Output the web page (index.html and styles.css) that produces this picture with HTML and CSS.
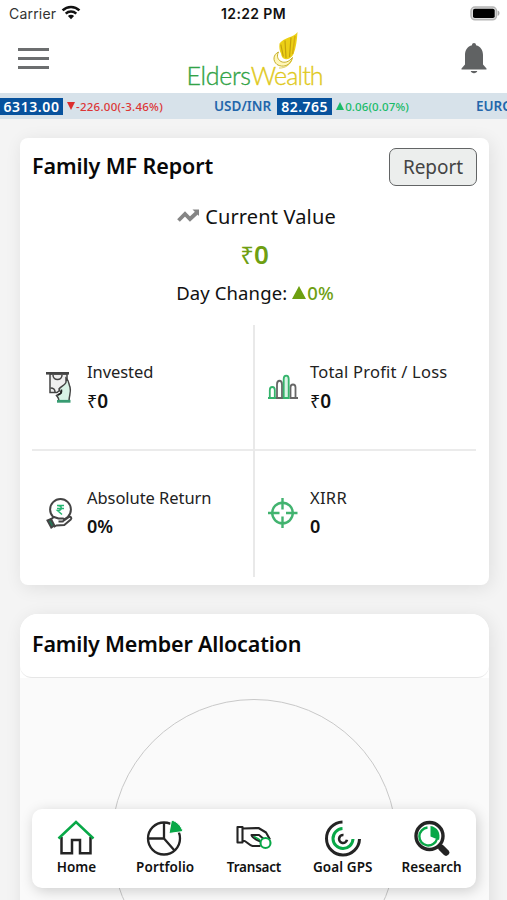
FILE: index.html
```html
<!DOCTYPE html>
<html lang="en">
<head>
<meta charset="utf-8">
<meta name="viewport" content="width=device-width, initial-scale=1">
<title>EldersWealth</title>
<link rel="stylesheet" href="styles.css">
</head>
<body>
<div class="screen">
  <div class="status">
    <div class="status-side"><span class="carrier">Carrier</span>
      <svg width="20" height="15" viewBox="0 0 20 15" fill="none" stroke="#111"><path d="M1.600 5.400a12 12 0 0 1 16.800 0" stroke-width="2.600"/><path d="M4.700 8.700a7.600 7.600 0 0 1 10.600 0" stroke-width="2.400"/><path d="M10 14.200 6.900 11a4.400 4.400 0 0 1 6.200 0z" fill="#111" stroke="none"/></svg>
    </div>
    <span class="clock">12:22 PM</span>
    <div class="status-side status-end">
      <svg width="30" height="15" viewBox="0 0 30 15"><rect x="1" y="1" width="25.500" height="12.800" rx="4" fill="#ddd" stroke="#b5b5b5" stroke-width="1.500"/><rect x="3" y="2.800" width="21.700" height="9.200" rx="1.800" fill="#000"/><path d="M27.700 4.600c2.400 1 2.400 4.200 0 5.200z" fill="#aaa"/></svg>
    </div>
  </div>

  <header class="topbar">
    <div class="menu"><i></i><i></i><i></i></div>
    <div class="logo">
      <svg class="wing" width="26" height="37" viewBox="0 0 26 37">
        <path d="M24.500 0C21.500 5 10 6 6.500 11.500c-.5 4 0 7.500 1.500 10 .5 3 2 5.500 4 5.500 4 1 7-2 8.500-5 2.500-6 3.500-14 4-22z" fill="#ecd015"/>
        <path d="M18 5.500 16.500 25M12 8.500 13 26M7.800 12.500l2.500 12" stroke="#c4a10c" stroke-width="1.200" fill="none"/>
        <path d="M22 4 19.500 22" stroke="#d8ae10" stroke-width="1.500"/>
        <path d="M5.500 20C0 22.500-.5 29 4 32.500c5.500 3.500 13.500 1.500 15.500-7-3.500 4.500-8 5.700-11.500 4C4.500 27.500 3.500 24 5.500 20z" fill="#fff6b8" stroke="#c0a718" stroke-width=".9"/>
        <path d="M6 36c6 .5 11.500-3.500 13-8.500" fill="none" stroke="#d9bd12" stroke-width=".7"/>
      </svg>
      <div class="wordmark"><span>Elders</span><b>Wealth</b></div>
    </div>
    <svg class="bell" width="26" height="31" viewBox="0 0 26 31" fill="#606263"><path d="M13 0c1.200 0 2 .9 2 2.200C19.500 3.300 22 7 22 12v9.500l3.500 4V26.500H.5V25.500l3.500-4V12c0-5 2.500-8.700 7-9.800C11 .9 11.800 0 13 0zM9.700 28h6.600c-.4 1.400-1.700 2.200-3.300 2.200s-2.900-.8-3.300-2.200z"/></svg>
  </header>

  <div class="ticker">
    <div class="quote"><span class="price p1">6313.00</span><span class="down"><i class="tri tri-down"></i>-226.00(-3.46%)</span></div>
    <div class="quote q2"><span class="pair">USD/INR</span><span class="price p2">82.765</span><span class="up"><i class="tri tri-up"></i>0.06(0.07%)</span></div>
    <div class="quote q3"><span class="pair">EURO/INR</span></div>
  </div>

  <main>
    <section class="card report">
      <div class="card-head"><h2>Family MF Report</h2><button class="btn">Report</button></div>
      <div class="summary">
        <div class="current"><svg width="23" height="14" viewBox="0 0 23 14" fill="none" stroke="#858585" stroke-width="3.800"><path d="M1.500 11.500 8 5l5 5 7-6.500"/><path d="M15.500.5H22v6.500z" fill="#858585" stroke="none"/></svg><span>Current Value</span></div>
        <div class="amount">₹<b>0</b></div>
        <div class="day"><span>Day Change:</span><i class="tri tri-day"></i><em>0%</em></div>
      </div>
      <div class="stats">
        <div class="stat">
          <svg width="30" height="34" viewBox="0 0 30 34" fill="none" stroke="#444" stroke-width="1.500"><path d="M5 4v18.500h7l6-5 4-5V4z" fill="#eee"/><path d="M1 3.300h23" stroke-width="2.600"/><path d="M5.500 18c3 0 4.500 2 4.500 4M8 5c0 6 9 6 9 0"/><path d="M21 12.500V8c3 2.500 2.500 5.500 4 9 1.500 5-1 8.500-1 14H14c0-3-1-3.500-2.500-5.500L16 23l-2-4c2-3 5-3 7-6.500" fill="#d8f2e5"/><path d="M13 25c3-1 4-2.500 3.500-5.500" stroke="#222"/><path d="M12 31.300h13.500" stroke="#389b72" stroke-width="2.800"/></svg>
          <div><div class="label l1">Invested</div><div class="value">₹<b>0</b></div></div>
        </div>
        <div class="stat right">
          <svg width="30" height="34" viewBox="0 0 30 34" fill="none" stroke-width="1.800"><g stroke="#666"><path d="M9 28V14.500c0-5 5-5 5 0V28M22.500 28V17.500c0-4 5-4 5 0V28M8 28h7M21.500 28H30"/></g><g stroke="#35b46c"><path d="M1.800 28v-8c0-4 5-4 5 0v8M0 28h8"/><path d="M15.700 28V9c0-4.600 5-4.600 5 0v19z" fill="#d8f3e4"/></g></svg>
          <div><div class="label l2">Total Profit / Loss</div><div class="value">₹<b>0</b></div></div>
        </div>
        <div class="stat lower">
          <svg width="30" height="34" viewBox="0 0 30 34" fill="none" stroke="#444" stroke-width="2"><circle cx="15.500" cy="13.500" r="10.400"/><path d="M5.500 23.500 9 21l4.500 1.500h4.500c1.800.5 1.500 3-.5 3h-4M17.500 25.500l6.500-4.500c2-.6 3 1 1.800 2.500l-6.500 5.500-8 .5-2.500 1.500" fill="#fff" stroke-linejoin="round"/><path d="m2.500 24.500 3.500-1.500 3.300 6.500-3 2z" fill="#237657"/><path d="M12 9.500h7M12 12.500h7M12.500 9.500c5 0 5 5 0 5l4.500 4" stroke="#25b572" stroke-width="1.500"/></svg>
          <div><div class="label l3">Absolute Return</div><div class="value"><b>0%</b></div></div>
        </div>
        <div class="stat right lower">
          <svg width="30" height="34" viewBox="0 0 30 34" fill="none" stroke="#42b36f" stroke-width="2.400"><circle cx="14.500" cy="17" r="10.300"/><path d="M14.500 2v11.500M14.500 20.500V32M0 17h11.500M18 17h11.500"/></svg>
          <div><div class="label l4">XIRR</div><div class="value"><b>0</b></div></div>
        </div>
      </div>
    </section>

    <section class="card alloc">
      <div class="alloc-head"><h2 class="wide">Family Member Allocation</h2></div>
      <div class="chart"><div class="ring"></div></div>
    </section>
  </main>

  <nav class="tabs">
    <div class="tab"><svg width="38" height="38" viewBox="0 0 38 38" fill="none" stroke="#242424" stroke-width="2.500"><path d="M4.500 18v16.200H15V21h8v13.200h10.500V18"/><path d="M1.500 19.500 19 3l17.500 16.500" stroke="#08a847"/></svg><span class="t1">Home</span></div>
    <div class="tab"><svg width="38" height="38" viewBox="0 0 38 38" fill="none" stroke="#242424" stroke-width="2.300"><circle cx="18" cy="19.500" r="16"/><path d="M18 3.500v16H2M18 19.500l10.500 12"/><path d="M23 14.500 25.500 1C31 2.500 35 6.500 37 12.500z" fill="#08a847" stroke="#fff" stroke-width="1"/></svg><span class="t2">Portfolio</span></div>
    <div class="tab"><svg width="38" height="38" viewBox="0 0 38 38" fill="none" stroke="#242424" stroke-width="2.100" stroke-linejoin="round"><path d="M2.500 8h5v15.500h-5zM7.500 9.500 23.500 9l7.500 4.500 4 7M7.500 21.500c4 0 6 4.500 10 5.500h8"/><path d="m30 21-6-5h-7.500c1 3 3.500 4.500 9 6.500"/><path d="m19 17.500 6 3.500" stroke="#08a847" stroke-width="1.500"/><circle cx="30.500" cy="24" r="5" fill="#fff" stroke="#08a847"/></svg><span class="t3">Transact</span></div>
    <div class="tab"><svg width="38" height="38" viewBox="0 0 38 38" fill="none" stroke-width="3"><path d="M18.500 3A16.500 16.500 0 1 0 35.500 20" stroke="#242424"/><path d="M18.500 9.500A10 10 0 1 0 29 20" stroke="#08a847"/><path d="M19.500 16A4 4 0 1 0 23 20.800" stroke="#242424" stroke-width="2.600"/></svg><span class="t4">Goal GPS</span></div>
    <div class="tab"><svg width="38" height="38" viewBox="0 0 38 38" fill="none" stroke="#242424"><circle cx="16.500" cy="17" r="13.500" stroke-width="3.400"/><path d="m26 27 2.500 2.500" stroke-width="3"/><path d="m28.500 29 4.500 4.500" stroke-width="6.500" stroke-linecap="round"/><path d="M14.500 8.500a9 9 0 1 0 9.500 11.500" stroke="#08a847" stroke-width="2.400"/><path d="M17.500 7v10.500l8.500 3.500c1.800-7-1.500-13-8.500-14z" fill="#08a847" stroke="none"/></svg><span class="t5">Research</span></div>
  </nav>
</div>
</body>
</html>
```
FILE: styles.css
```css
* { box-sizing: border-box; }
body { margin: 0; background: #f4f4f4; font-family: "Noto Sans", sans-serif; color: #111; }
svg { display: block; flex: none; }
h2, em, b { margin: 0; font-style: normal; }
.screen { position: relative; height: 900px; overflow: hidden; background: #f4f4f4; }
.status { display: flex; height: 28px; padding: 0 7px 0 9px; align-items: center; background: #fff; font-family: Inter, sans-serif; font-size: 14px; }
.status-side { flex: 1; display: flex; align-items: center; gap: 5px; }
.status-side svg { margin-top: -3px; }
.status-end { justify-content: flex-end; }
.status-end svg { margin-top: -1px; }
.carrier { color: #333; letter-spacing: .2px; margin-top: -1px; }
.clock { font-weight: 600; font-size: 14px; letter-spacing: .35px; margin: -2px 1px 0 -1px; }
.topbar { display: flex; height: 65px; justify-content: space-between; background: #fff; padding: 0 20px 0 18px; }
.menu { display: grid; gap: 6px; width: 31px; align-content: start; padding-top: 20px; }
.menu i { height: 3px; background: #6c6e6f; }
.logo { width: 134px; padding-left: 1px; margin-right: 5px; }
.wing { margin: 4px 0 0 86px; }
.wordmark { margin-top: -8px; font: 300 25px/28px Lato, sans-serif; letter-spacing: -.85px; white-space: nowrap; -webkit-text-stroke: .35px; }
.wordmark span { color: #32a347; letter-spacing: -.3px; }
.wordmark b { color: #dfc91c; font-weight: 300; }
.bell { margin-top: 15px; }
.ticker { display: flex; height: 26px; align-items: center; background: #d7e2ea; white-space: nowrap; overflow: hidden; }
.quote { display: flex; align-items: center; flex: none; }
.price { height: 17px; line-height: 17px; background: #07529d; color: #fff; font-size: 14px; font-weight: 600; text-align: center; }
.p1 { width: 63px; letter-spacing: .6px; }
.p2 { width: 55px; margin: 0 4px 0 6px; letter-spacing: .5px; }
.pair { color: #2366ab; font-size: 13.500px; font-weight: 600; letter-spacing: 0; }
.quote:first-child { width: 214px; }
.q2 { width: 262px; }
.down, .up { display: flex; align-items: center; font-size: 11.500px; font-weight: 500; }
.down { color: #dc3535; margin-left: 4px; letter-spacing: .25px; }
.up { color: #19bb68; letter-spacing: .1px; }
.tri { width: 0; height: 0; border: solid transparent; border-width: 0 4.500px 8px; }
.tri-down { border-width: 8px 4.500px 0; border-top-color: #dc2d2d; margin-right: 1px; }
.tri-up { border-bottom-color: #19bb68; margin-right: 1px; }
main { display: grid; gap: 29px; padding: 19px 18px 0 20px; }
.card { background: #fff; box-shadow: 2px 3px 18px rgba(0,0,0,.09); }
.report { height: 447px; border-radius: 8px; padding: 10px 12px 0; }
.card-head { display: flex; justify-content: space-between; height: 38px; }
h2 { font-size: 21.500px; font-weight: 600; line-height: 36px; letter-spacing: -.1px; white-space: nowrap; color: #080808; }
.wide { letter-spacing: -.18px; }
.btn { width: 88px; height: 38px; padding: 0; border: 1.500px solid #626465; border-radius: 7px; background: #eceeed; font: 400 19px "Noto Sans", sans-serif; color: #444; letter-spacing: -.05px; }
.summary { display: flex; flex-direction: column; align-items: center; }
.current { display: flex; align-items: center; gap: 5px; height: 30px; margin: 15px 0 0 4px; font-size: 20px; letter-spacing: .15px; }
.amount { height: 38px; line-height: 38px; margin-top: 4px; font-size: 24px; color: #6f9f13; }
.amount b { font-weight: 600; font-size: 26px; }
.day { display: flex; align-items: center; height: 30px; margin: 4px 0 0 1px; font-size: 18.500px; letter-spacing: .12px; }
.tri-day { border-width: 0 7.500px 13px; border-bottom-color: #6d9f10; margin: 0 1px 0 5px; }
.day em { color: #6f9f13; font-weight: 500; }
.stats { display: grid; grid-template-columns: 222px 222px; grid-template-rows: 126px 126px; margin-top: 18px; background: linear-gradient(#e9e9e9,#e9e9e9) 221px 0/2px 252px no-repeat, linear-gradient(#ebebeb,#ebebeb) 0 124px/444px 2px no-repeat; }
.stat { display: flex; gap: 12px; padding: 34px 0 0 13px; white-space: nowrap; }
.stat svg { margin-top: 11px; }
.stat.right { padding-left: 14px; }
.label { font-size: 16.500px; line-height: 25px; color: #222; }
.l1, .l3 { letter-spacing: -.06px; }
.l2 { letter-spacing: .22px; }
.l4 { letter-spacing: .3px; }
.value { font-size: 18px; line-height: 28px; margin-top: 3px; }
.value b { font-weight: 600; font-size: 19px; }
.lower .value { margin-top: 2px; }
.lower .value b { font-size: 18px; }
.alloc { height: 340px; border-radius: 18px 18px 0 0; overflow: hidden; }
.alloc-head { height: 64px; padding: 12px; border-radius: 0 0 12px 12px; border-bottom: 1px solid #e6e6e6; background: #fff; }
.chart { height: 276px; padding-top: 21px; background: #fafafa; }
.ring { width: 286px; height: 286px; margin: 0 0 0 91px; border: 1px solid #c8c8c8; border-radius: 50%; }
.tabs { position: absolute; left: 32px; top: 809px; width: 444px; height: 79px; display: grid; grid-template-columns: repeat(5, 1fr); border-radius: 10px; background: #fff; box-shadow: 2px 3px 14px rgba(0,0,0,.18); }
.tab { display: flex; flex-direction: column; align-items: center; padding-top: 10px; font-size: 13.500px; line-height: 21px; font-weight: 600; white-space: nowrap; }
.t2, .t4 { letter-spacing: .1px; }
.t3 { letter-spacing: -.2px; }
```
